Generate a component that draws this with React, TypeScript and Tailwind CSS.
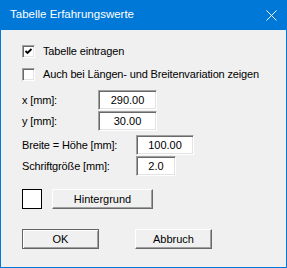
import React from 'react';

const font = { fontFamily: '"Liberation Sans", Arial, sans-serif' };

function CheckBox({ checked, label }: { checked?: boolean; label: string }) {
  return (
    <div className="flex items-center h-[13px]">
      <div className="w-[13px] h-[13px] bg-white border border-t-[#a0a0a0] border-l-[#a0a0a0] border-b-white border-r-white shadow-[inset_1px_1px_0_#696969,inset_-1px_-1px_0_#e3e3e3] flex items-center justify-center">
        {checked && (
          <svg width="9" height="9" viewBox="0 0 9 9">
            <path d="M1.5 4 L3.5 6 L7.5 2" stroke="#000" strokeWidth="1.8" fill="none" />
          </svg>
        )}
      </div>
      <span className="ml-[8px] text-[11px] leading-none text-black tracking-[-0.15px]">{label}</span>
    </div>
  );
}

function Field({ label, value, left, width }: { label: string; value: string; left: number; width: string }) {
  return (
    <div className="flex items-center h-[20px]">
      <span className="text-[11px] leading-none text-black tracking-[-0.15px]" style={{ width: left }}>{label}</span>
      <div className={`${width} h-[20px] bg-white border border-t-[#a0a0a0] border-l-[#a0a0a0] border-b-white border-r-white shadow-[inset_1px_1px_0_#696969,inset_-1px_-1px_0_#e3e3e3] flex items-center justify-center text-[11px] text-black`}>
        {value}
      </div>
    </div>
  );
}

function Button({ label, width, primary }: { label: string; width: string; primary?: boolean }) {
  return (
    <div
      className={`${width} h-[20px] bg-[#f0f0f0] flex items-center justify-center text-[11px] text-black ${
        primary
          ? 'border border-[#646464] shadow-[inset_1px_1px_0_#ffffff,inset_-1px_-1px_0_#a0a0a0]'
          : 'border border-t-white border-l-white border-b-[#696969] border-r-[#696969] shadow-[inset_-1px_-1px_0_#a0a0a0]'
      }`}
    >
      {label}
    </div>
  );
}

export default function App() {
  return (
    <div className="w-[287px] h-[268px] bg-[#f0f0f0] border-x border-b border-[#0078d7] flex flex-col" style={font}>
      <div className="h-[30px] -mx-px bg-[#0078d7] flex items-center justify-between pl-[10px] pr-[10px] shrink-0">
        <span className="text-white text-[11.5px]">Tabelle Erfahrungswerte</span>
        <svg width="11" height="11" viewBox="0 0 11 11">
          <path d="M0.5 0.5 L10.5 10.5 M10.5 0.5 L0.5 10.5" stroke="#fff" strokeWidth="1" />
        </svg>
      </div>

      <div className="flex flex-col pl-[21px]">
        <div className="mt-[15px]">
          <CheckBox checked label="Tabelle eintragen" />
        </div>
        <div className="mt-[10px]">
          <CheckBox label="Auch bei Längen- und Breitenvariation zeigen" />
        </div>

        <div className="mt-[9px]">
          <Field label="x [mm]:" value="290.00" left={76} width="w-[59px]" />
        </div>
        <div className="mt-[1px]">
          <Field label="y [mm]:" value="30.00" left={76} width="w-[59px]" />
        </div>
        <div className="mt-[4px]">
          <Field label="Breite = Höhe [mm]:" value="100.00" left={114} width="w-[58px]" />
        </div>
        <div className="mt-[1px]">
          <Field label="Schriftgröße [mm]:" value="2.0" left={114} width="w-[40px]" />
        </div>

        <div className="mt-[13px] flex items-center gap-[10px]">
          <div className="w-[20px] h-[20px] bg-white border border-black" />
          <Button label="Hintergrund" width="w-[101px]" />
        </div>

        <div className="mt-[20px] flex items-center gap-[36px]">
          <Button label="OK" width="w-[77px]" primary />
          <Button label="Abbruch" width="w-[77px]" />
        </div>
      </div>
    </div>
  );
}
